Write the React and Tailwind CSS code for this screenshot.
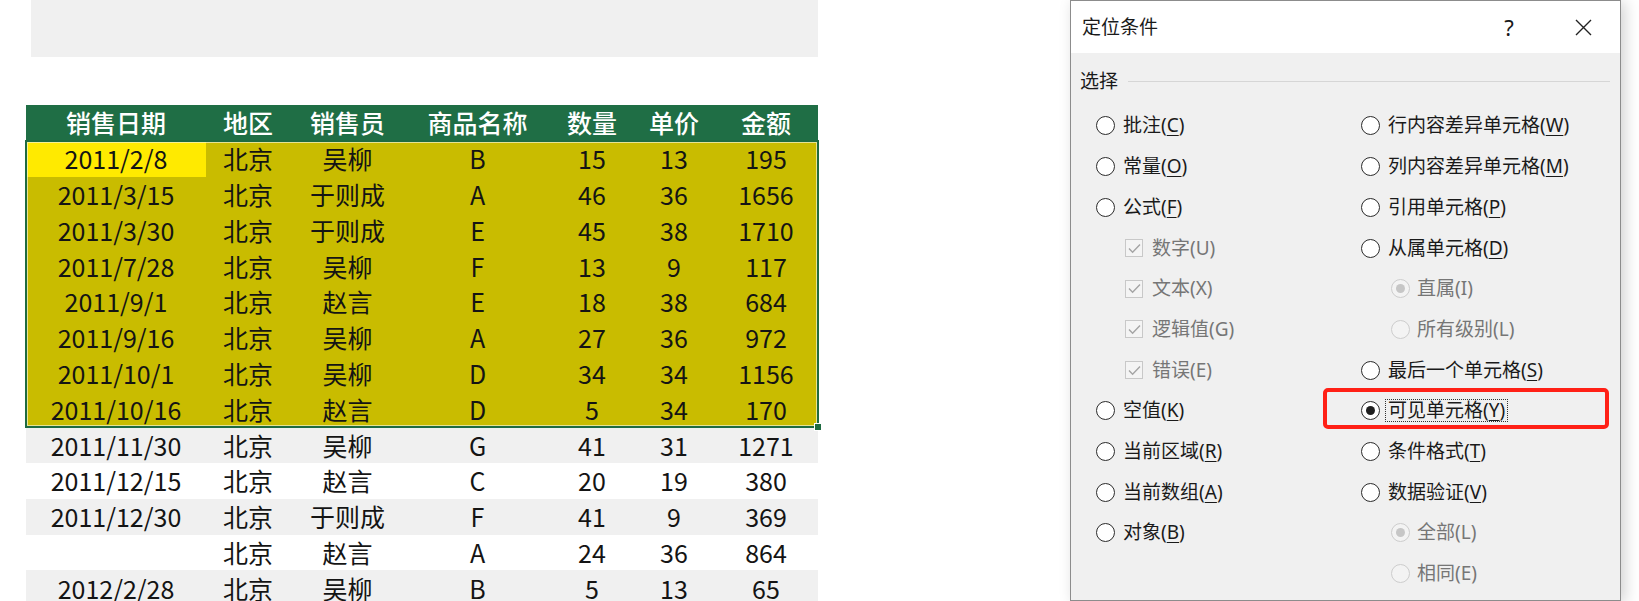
import { useState } from 'react';

const cols = [
  { key: 'date', title: '销售日期', w: 'w-[180px]' },
  { key: 'area', title: '地区', w: 'w-[84px]' },
  { key: 'seller', title: '销售员', w: 'w-[115px]' },
  { key: 'product', title: '商品名称', w: 'w-[145px]' },
  { key: 'qty', title: '数量', w: 'w-[84px]' },
  { key: 'price', title: '单价', w: 'w-[80px]' },
  { key: 'amount', title: '金额', w: 'w-[104px]' },
];

const rows = [
  ['2011/2/8', '北京', '吴柳', 'B', 15, 13, 195],
  ['2011/3/15', '北京', '于则成', 'A', 46, 36, 1656],
  ['2011/3/30', '北京', '于则成', 'E', 45, 38, 1710],
  ['2011/7/28', '北京', '吴柳', 'F', 13, 9, 117],
  ['2011/9/1', '北京', '赵言', 'E', 18, 38, 684],
  ['2011/9/16', '北京', '吴柳', 'A', 27, 36, 972],
  ['2011/10/1', '北京', '吴柳', 'D', 34, 34, 1156],
  ['2011/10/16', '北京', '赵言', 'D', 5, 34, 170],
  ['2011/11/30', '北京', '吴柳', 'G', 41, 31, 1271],
  ['2011/12/15', '北京', '赵言', 'C', 20, 19, 380],
  ['2011/12/30', '北京', '于则成', 'F', 41, 9, 369],
  ['', '北京', '赵言', 'A', 24, 36, 864],
  ['2012/2/28', '北京', '吴柳', 'B', 5, 13, 65],
];

const font = "font-['Noto_Sans','Noto_Sans_CJK_SC',sans-serif]";
const sheetFont = "font-['Noto_Sans_CJK_SC',sans-serif]";

function DataRow({ row, bg, first }) {
  return (
    <div className={`flex h-[35.8px] items-center ${bg}`}>
      {row.map((v, i) => (
        <div
          key={i}
          className={`${cols[i].w} h-full flex items-center justify-center ${first && i === 0 ? 'bg-[#ffea00]' : ''}`}
        >
          {v}
        </div>
      ))}
    </div>
  );
}

function SalesTable() {
  const selected = rows.slice(0, 8);
  const rest = rows.slice(8);
  return (
    <div className={`w-[792px] text-[25px] leading-none text-[#141414] ${sheetFont}`}>
      {/* Header */}
      <div className="flex h-[35.8px] items-center bg-[#1f6e45] text-white font-medium">
        {cols.map((c) => (
          <div key={c.key} className={`${c.w} text-center`}>{c.title}</div>
        ))}
      </div>

      {/* Selected block */}
      <div className="relative bg-[#c9bc00]">
        {selected.map((r, i) => (
          <DataRow key={i} row={r} bg="" first={i === 0} />
        ))}
        <div className="absolute -inset-x-[1px] -top-[1px] -bottom-[1px] border-2 border-[#1e6b41] pointer-events-none">
          <div className="w-full h-full border border-[#f4f4d0]/70" />
        </div>
        <div className="absolute -right-[4px] -bottom-[4px] w-[8px] h-[8px] bg-[#1e6b41] border border-white" />
      </div>

      {/* Rest */}
      {rest.map((r, i) => (
        <DataRow key={i} row={r} bg={i % 2 === 0 ? 'bg-[#f0f0f0]' : 'bg-white'} />
      ))}
    </div>
  );
}

function Label({ text, hot, disabled }) {
  return (
    <span className={disabled ? 'text-[#767676]' : 'text-[#1a1a1a]'}>
      {text}(
      {disabled ? hot : <span className="underline underline-offset-[3px] decoration-1">{hot}</span>}
      )
    </span>
  );
}

function Radio({ checked, disabled }) {
  return (
    <span
      className={`w-[19px] h-[19px] rounded-full flex items-center justify-center shrink-0 border-[1.5px] ${
        disabled ? 'border-[#cdcdcd] bg-[#f3f3f3]' : 'border-[#2b2b2b] bg-white'
      }`}
    >
      {checked && (
        <span className={`w-[9px] h-[9px] rounded-full ${disabled ? 'bg-[#c6c6c6]' : 'bg-[#1f1f1f]'}`} />
      )}
    </span>
  );
}

function Check() {
  return (
    <span className="w-[18px] h-[18px] border border-[#c8c8c8] bg-[#f4f4f4] flex items-center justify-center shrink-0">
      <svg width="15" height="15" viewBox="0 0 15 15" fill="none">
        <path d="M2 7.6 L5.6 11.2 L13 3.6" stroke="#a4a4a4" strokeWidth="1.4" />
      </svg>
    </span>
  );
}

const leftItems = [
  { type: 'radio', text: '批注', hot: 'C' },
  { type: 'radio', text: '常量', hot: 'O' },
  { type: 'radio', text: '公式', hot: 'F' },
  { type: 'check', text: '数字', hot: 'U' },
  { type: 'check', text: '文本', hot: 'X' },
  { type: 'check', text: '逻辑值', hot: 'G' },
  { type: 'check', text: '错误', hot: 'E' },
  { type: 'radio', text: '空值', hot: 'K' },
  { type: 'radio', text: '当前区域', hot: 'R' },
  { type: 'radio', text: '当前数组', hot: 'A' },
  { type: 'radio', text: '对象', hot: 'B' },
  null,
];

const rightItems = [
  { type: 'radio', text: '行内容差异单元格', hot: 'W' },
  { type: 'radio', text: '列内容差异单元格', hot: 'M' },
  { type: 'radio', text: '引用单元格', hot: 'P' },
  { type: 'radio', text: '从属单元格', hot: 'D' },
  { type: 'sub', text: '直属', hot: 'I', checked: true },
  { type: 'sub', text: '所有级别', hot: 'L' },
  { type: 'radio', text: '最后一个单元格', hot: 'S' },
  { type: 'radio', text: '可见单元格', hot: 'Y', checked: true, focus: true },
  { type: 'radio', text: '条件格式', hot: 'T' },
  { type: 'radio', text: '数据验证', hot: 'V' },
  { type: 'sub', text: '全部', hot: 'L', checked: true },
  { type: 'sub', text: '相同', hot: 'E' },
];

function Option({ item }) {
  if (!item) return <div className="h-[40.7px]" />;
  if (item.type === 'check') {
    return (
      <div className="h-[40.7px] flex items-center pl-[29px] gap-[9px]">
        <Check />
        <Label text={item.text} hot={item.hot} disabled />
      </div>
    );
  }
  if (item.type === 'sub') {
    return (
      <div className="h-[40.7px] flex items-center pl-[30px] gap-[7px]">
        <Radio checked={item.checked} disabled />
        <Label text={item.text} hot={item.hot} disabled />
      </div>
    );
  }
  return (
    <div className="relative h-[40.7px] flex items-center gap-[8px]">
      <Radio checked={item.checked} />
      {item.focus ? (
        <span className="border border-dotted border-[#333] px-[2px] py-[1px] -ml-[3px]">
          <Label text={item.text} hot={item.hot} />
        </span>
      ) : (
        <Label text={item.text} hot={item.hot} />
      )}
      {item.focus && (
        <div className="absolute -left-[38px] top-[-2px] w-[286px] h-[41px] border-4 border-[#ff2016] rounded-[5px] pointer-events-none" />
      )}
    </div>
  );
}

function GotoDialog() {
  const [choice] = useState('Y');
  return (
    <div className={`w-[551px] h-[601px] border border-[#8c8c8c] bg-[#f0f0f0] flex flex-col shadow-[4px_2px_14px_rgba(0,0,0,0.18)] text-[19px] leading-none ${font}`} data-choice={choice}>
      {/* Title bar */}
      <div className="h-[52px] shrink-0 bg-white flex items-center pl-[11px] pr-[28px] text-[#1a1a1a]">
        <span className="flex-1">定位条件</span>
        <span className="text-[22px] w-[20px] text-center mr-[56px]">?</span>
        <svg width="17" height="17" viewBox="0 0 17 17" stroke="#222" strokeWidth="1.4">
          <path d="M1 1 L16 16 M16 1 L1 16" />
        </svg>
      </div>

      {/* Group */}
      <div className="flex items-center pl-[9px] pr-[10px] h-[56px] shrink-0">
        <span className="text-[#1a1a1a]">选择</span>
        <div className="flex-1 h-px bg-[#d6d6d6] ml-[10px] mt-[1px]" />
      </div>

      <div className="grid grid-cols-[265px_1fr] pl-[25px] -mt-[3.4px]">
        <div className="flex flex-col">
          {leftItems.map((it, i) => (
            <Option key={i} item={it} />
          ))}
        </div>
        <div className="flex flex-col">
          {rightItems.map((it, i) => (
            <Option key={i} item={it} />
          ))}
        </div>
      </div>
    </div>
  );
}

export default function App() {
  return (
    <div className="w-[1639px] h-[601px] overflow-hidden bg-white flex">
      <div className="w-[818px] flex flex-col shrink-0">
        <div className="ml-[31px] w-[787px] h-[57px] shrink-0 bg-[#f0f0f0]" />
        <div className="ml-[26px] mt-[48px] shrink-0">
          <SalesTable />
        </div>
      </div>
      <div className="ml-[252px] shrink-0">
        <GotoDialog />
      </div>
    </div>
  );
}
